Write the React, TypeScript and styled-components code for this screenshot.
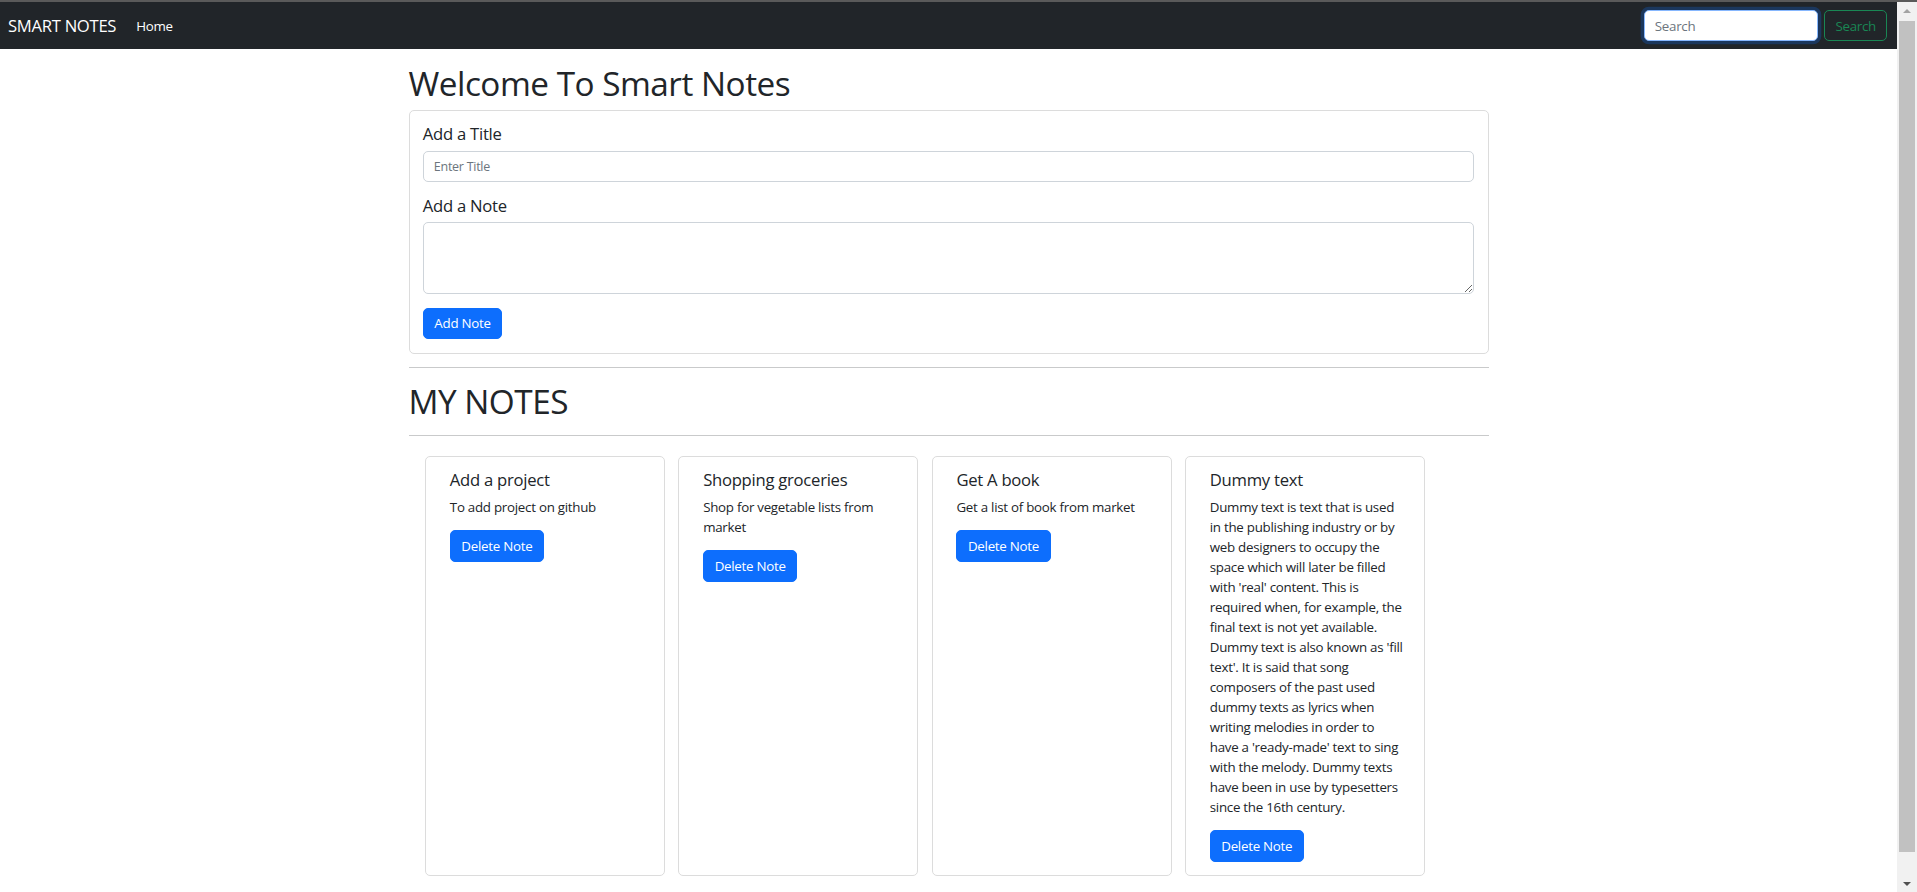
import React from "react";
import styled, { createGlobalStyle } from "styled-components";

const GlobalStyle = createGlobalStyle`
  html, body { margin: 0; padding: 0; height: 100%; overflow: hidden; background: #fff; }
  body {
    font-family: "Open Sans", "Noto Sans", "Liberation Sans", sans-serif;
    font-size: 13.33px;
    line-height: 20px;
    letter-spacing: -0.02em;
    color: #212529;
  }
  * { box-sizing: border-box; }
`;

const Screen = styled.div`
  height: 892px;
  display: flex;
  flex-direction: column;
  overflow: hidden;
`;

const TopStrip = styled.div`
  height: 2px;
  flex: none;
  background: #5a5a5a;
`;

const Body = styled.div`
  flex: 1;
  display: flex;
  min-height: 0;
`;

const Main = styled.main`
  flex: 1;
  min-width: 0;
  overflow: hidden;
`;

const Navbar = styled.nav`
  height: 47px;
  background: #212529;
  display: flex;
  align-items: center;
  justify-content: space-between;
  padding: 0 10px 0 8px;
`;

const NavLeft = styled.div`
  display: flex;
  align-items: center;
`;

const Brand = styled.a`
  font-size: 16.67px;
  color: #fff;
  text-decoration: none;
  margin-right: 13.33px;
  letter-spacing: -0.3px;
`;

const NavLink = styled.a`
  padding: 0 6.67px;
  color: #fff;
  font-size: 13.33px;
  text-decoration: none;
`;

const SearchForm = styled.form`
  display: flex;
  align-items: center;
  gap: 6.67px;
`;

const SearchInput = styled.input`
  width: 174px;
  height: 31.67px;
  padding: 5px 10px;
  font: inherit;
  font-size: 13.33px;
  letter-spacing: inherit;
  color: #212529;
  background: #fff;
  border: 1px solid #86b7fe;
  border-radius: 5px;
  box-shadow: 0 0 0 3.33px rgba(13, 110, 253, 0.25);
  outline: none;
  &::placeholder { color: #6c757d; }
`;

const OutlineButton = styled.button`
  height: 31.67px;
  padding: 0 10px;
  font: inherit;
  font-size: 13.33px;
  letter-spacing: inherit;
  color: #198754;
  background: transparent;
  border: 1px solid #198754;
  border-radius: 5px;
`;

const Container = styled.div`
  width: 1080px;
  margin: 14px auto 0;
`;

const Heading = styled.h1`
  margin: 0 0 6.67px;
  font-size: 33.33px;
  line-height: 40px;
  font-weight: 500;
  letter-spacing: -0.015em;
  color: #212529;
`;

const FormCard = styled.div`
  border: 1px solid #dcdcdc;
  border-radius: 5px;
  padding: 13.33px;
`;

const Field = styled.div`
  margin-bottom: 13.33px;
`;

const Label = styled.label`
  display: block;
  margin-bottom: 6.67px;
  font-size: 16.67px;
  line-height: 20px;
  font-weight: 500;
`;

const TextInput = styled.input`
  display: block;
  width: 100%;
  height: 31.67px;
  padding: 5px 10px;
  font: inherit;
  font-size: 12.5px;
  letter-spacing: inherit;
  border: 1px solid #ced4da;
  border-radius: 5px;
  outline: none;
  &::placeholder { color: #6c757d; }
`;

const TextArea = styled.textarea`
  display: block;
  width: 100%;
  height: 72px;
  padding: 5px 10px;
  font: inherit;
  border: 1px solid #ced4da;
  border-radius: 5px;
  outline: none;
`;

const PrimaryButton = styled.button`
  height: 31.67px;
  padding: 0 10.5px;
  font: inherit;
  font-size: 13.33px;
  letter-spacing: inherit;
  color: #fff;
  background: #0d6efd;
  border: 1px solid #0d6efd;
  border-radius: 5px;
`;

const Rule = styled.hr`
  margin: 13.33px 0;
  border: 0;
  border-top: 1px solid #c9cacb;
`;

const NotesRow = styled.div`
  display: flex;
  flex-wrap: wrap;
  padding: 0 10px;
`;

const NoteCard = styled.div`
  width: 240px;
  margin: 6.67px;
  border: 1px solid #dcdcdc;
  border-radius: 5px;
  padding: 13.33px 23.67px;
`;

const NoteTitle = styled.h5`
  margin: 0 0 6.67px;
  font-size: 16.67px;
  line-height: 20px;
  font-weight: 500;
`;

const NoteText = styled.p`
  margin: 0 0 13.33px;
  white-space: nowrap;
`;

const Scrollbar = styled.div`
  width: 20px;
  flex: none;
  background: #f1f1f1;
  display: flex;
  flex-direction: column;
  align-items: center;
`;

const Arrow = styled.div<{ $dir: "up" | "down" }>`
  height: 17px;
  width: 100%;
  flex: none;
  display: flex;
  align-items: center;
  justify-content: center;
  &::before {
    content: "";
    border-left: 4.5px solid transparent;
    border-right: 4.5px solid transparent;
    ${(p) =>
      p.$dir === "up"
        ? "border-bottom: 4.5px solid #a3a3a3;"
        : "border-top: 4.5px solid #505050;"}
  }
`;

const Thumb = styled.div`
  width: 16px;
  height: 831px;
  margin-top: 2px;
  background: #c1c1c1;
  flex: none;
`;

const Spacer = styled.div`
  flex: 1;
`;

const dummyLines = [
  "Dummy text is text that is used",
  "in the publishing industry or by",
  "web designers to occupy the",
  "space which will later be filled",
  "with 'real' content. This is",
  "required when, for example, the",
  "final text is not yet available.",
  "Dummy text is also known as 'fill",
  "text'. It is said that song",
  "composers of the past used",
  "dummy texts as lyrics when",
  "writing melodies in order to",
  "have a 'ready-made' text to sing",
  "with the melody. Dummy texts",
  "have been in use by typesetters",
  "since the 16th century.",
];

const notes: { title: string; lines: string[] }[] = [
  { title: "Add a project", lines: ["To add project on github"] },
  { title: "Shopping groceries", lines: ["Shop for vegetable lists from", "market"] },
  { title: "Get A book", lines: ["Get a list of book from market"] },
  { title: "Dummy text", lines: dummyLines },
];

export default function App() {
  return (
    <>
      <GlobalStyle />
      <Screen>
        <TopStrip />
        <Body>
          <Main>
            <Navbar>
              <NavLeft>
                <Brand href="#">SMART NOTES</Brand>
                <NavLink href="#">Home</NavLink>
              </NavLeft>
              <SearchForm onSubmit={(e) => e.preventDefault()}>
                <SearchInput type="search" placeholder="Search" />
                <OutlineButton type="submit">Search</OutlineButton>
              </SearchForm>
            </Navbar>
            <Container>
              <Heading>Welcome To Smart Notes</Heading>
              <FormCard>
                <Field>
                  <Label>Add a Title</Label>
                  <TextInput placeholder="Enter Title" />
                </Field>
                <Field>
                  <Label>Add a Note</Label>
                  <TextArea rows={3} />
                </Field>
                <PrimaryButton>Add Note</PrimaryButton>
              </FormCard>
              <Rule />
              <Heading>MY NOTES</Heading>
              <Rule />
              <NotesRow>
                {notes.map((n) => (
                  <NoteCard key={n.title}>
                    <NoteTitle>{n.title}</NoteTitle>
                    <NoteText>
                      {n.lines.map((l, i) => (
                        <React.Fragment key={i}>
                          {i > 0 && <br />}
                          {l}
                        </React.Fragment>
                      ))}
                    </NoteText>
                    <PrimaryButton>Delete Note</PrimaryButton>
                  </NoteCard>
                ))}
              </NotesRow>
            </Container>
          </Main>
          <Scrollbar>
            <Arrow $dir="up" />
            <Thumb />
            <Spacer />
            <Arrow $dir="down" />
          </Scrollbar>
        </Body>
      </Screen>
    </>
  );
}
